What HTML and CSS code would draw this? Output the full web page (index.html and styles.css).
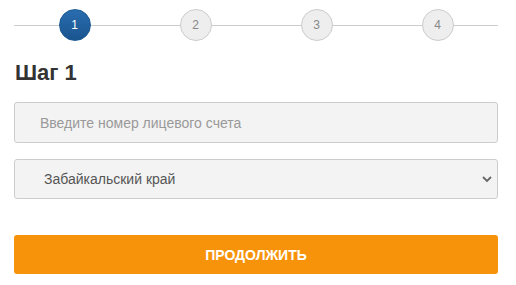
FILE: index.html
```html
<!DOCTYPE html>
<html>
<head>
  <meta charset="utf-8">
  <title>Шаг 1</title>
  <link rel="stylesheet" href="styles.css">
</head>
<body>
  <div class="wizard">
    <div class="steps">
      <div class="step"><span class="dot active">1</span></div>
      <div class="step"><span class="dot">2</span></div>
      <div class="step"><span class="dot">3</span></div>
      <div class="step"><span class="dot">4</span></div>
    </div>

    <h2 class="step-title">Шаг 1</h2>

    <form class="form">
      <input class="field" type="text" placeholder="Введите номер лицевого счета">
      <div class="select-wrap">
        <select class="field select">
          <option>Забайкальский край</option>
        </select>
        <svg class="arrow" width="10" height="7" viewBox="0 0 10 7">
          <path d="M1 1 L5 5 L9 1" fill="none" stroke="#666" stroke-width="1.8"/>
        </svg>
      </div>
      <button class="btn" type="button">Продолжить</button>
    </form>
  </div>
</body>
</html>
```

FILE: styles.css
```css
body {
  margin: 0;
  font-family: 'Liberation Sans', Arial, sans-serif;
  background-color: #fff;
}
.wizard {
  width: 484px;
  margin-left: 14px;
}
.steps {
  position: relative;
  display: flex;
  padding-top: 9px;
}
.steps::before {
  content: "";
  position: absolute;
  left: 0;
  right: 0;
  top: 25px;
  height: 1px;
  background-color: #ccc;
}
.step {
  flex: 1;
  display: flex;
  justify-content: center;
}
.dot {
  position: relative;
  width: 30px;
  height: 30px;
  border-radius: 50%;
  border: 1px solid #ccc;
  background-color: #eee;
  color: #888;
  font-size: 12px;
  display: flex;
  align-items: center;
  justify-content: center;
}
.dot.active {
  border-color: #1c5a92;
  background: linear-gradient(#2a6db0, #19548e);
  color: #fff;
}
.step-title {
  margin: 20px 0 0 1px;
  font-size: 22px;
  line-height: 24px;
  font-weight: bold;
  color: #333;
}
.form {
  margin-top: 17px;
  display: flex;
  flex-direction: column;
}
.field {
  box-sizing: border-box;
  width: 100%;
  height: 41px;
  border: 1px solid #ccc;
  border-radius: 3px;
  background-color: #f3f3f3;
  font-family: inherit;
  font-size: 14px;
  color: #555;
  padding: 0 0 0 25px;
  outline: none;
}
.field::placeholder {
  color: #999;
}
.select-wrap {
  position: relative;
  margin-top: 16px;
}
.select {
  display: block;
  height: 40px;
  font-size: 14px;
  padding-left: 29px;
  appearance: none;
  -webkit-appearance: none;
}
.arrow {
  position: absolute;
  right: 6px;
  top: 17px;
}
.btn {
  margin-top: 36px;
  height: 39px;
  border: none;
  border-radius: 3px;
  background-color: #f7930a;
  color: #fff;
  font-family: inherit;
  font-size: 14px;
  font-weight: bold;
  text-transform: uppercase;
  cursor: pointer;
}
.btn:hover {
  background-color: #e8870a;
}
```
